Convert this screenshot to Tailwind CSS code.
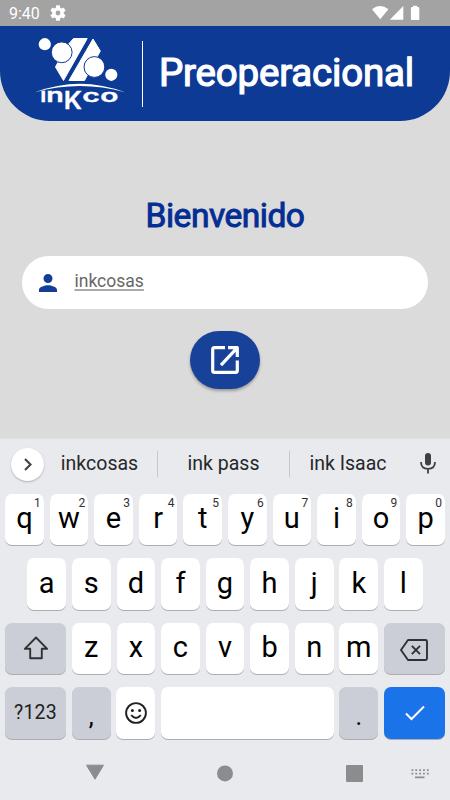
<!DOCTYPE html>
<html lang="es">
<head>
<meta charset="utf-8">
<meta name="viewport" content="width=device-width, initial-scale=1">
<title>Preoperacional</title>
<script src="https://cdn.jsdelivr.net/npm/@tailwindcss/browser@4"></script>
</head>
<body class="w-[450px] h-[800px] overflow-hidden bg-[#dbdbdb] font-[Roboto,sans-serif] flex flex-col">
<!-- Status bar -->
<div class="h-[26px] shrink-0 bg-[#a3a3a3] flex items-center pl-[9px] text-white">
  <span class="text-[16px] leading-none w-[41px] pt-px whitespace-nowrap">9:40</span>
  <svg class="w-4 h-4" viewBox="2 2 20 20" fill="white"><path d="M19.14 12.94c.04-.3.06-.61.06-.94s-.02-.64-.07-.94l2.03-1.58a.49.49 0 0 0 .12-.61l-1.92-3.32a.49.49 0 0 0-.59-.22l-2.39.96a7 7 0 0 0-1.62-.94l-.36-2.54a.48.48 0 0 0-.48-.41h-3.84a.48.48 0 0 0-.47.41l-.36 2.54a7 7 0 0 0-1.62.94l-2.39-.96a.48.48 0 0 0-.59.22L2.74 8.87a.48.48 0 0 0 .12.61l2.03 1.58a6 6 0 0 0 0 1.88l-2.03 1.58a.49.49 0 0 0-.12.61l1.92 3.32c.12.22.37.29.59.22l2.39-.96c.5.38 1.03.7 1.62.94l.36 2.54c.05.24.24.41.48.41h3.84c.24 0 .44-.17.47-.41l.36-2.54a7 7 0 0 0 1.62-.94l2.39.96c.22.08.47 0 .59-.22l1.92-3.32a.48.48 0 0 0-.12-.61zM12 15a3 3 0 1 1 0-6 3 3 0 0 1 0 6z"/></svg>
  <svg class="w-[49px] h-[16px] ml-auto mr-[29px]" viewBox="0 0 49 16" fill="white"><path d="M0 4.2Q8 -2.2 16.4 4.2L8.2 14.3ZM17.8 14.7L31.3 1V14.7ZM38.9 3q0-1 1-1h1.2V.8h4V2h1.2q1 0 1 1v11q0 1-1 1H39.9q-1 0-1-1z"/></svg>
</div>
<!-- Header -->
<header class="h-[95px] shrink-0 bg-[#0d3a95] rounded-b-[50px] flex items-start">
  <svg class="w-[142px] h-[95px] shrink-0" viewBox="0 26 142 95" fill="white">
    <path d="M73.5 38.500H87.2L63.5 80.5L55.500 67L66 47Z" stroke="white" stroke-linejoin="round"/>
    <path d="M93 39L100.300 51L84.5 80.5H69Z" stroke="white" stroke-linejoin="round"/>
    <circle cx="44.8" cy="44.2" r="6.1"/>
    <circle cx="61.7" cy="52.3" r="10.4" stroke="#0d3a95"/>
    <circle cx="94.4" cy="67" r="10.4" stroke="#0d3a95"/>
    <circle cx="111.3" cy="74.8" r="6.1"/>
    <path d="M35 92.3Q80 75.2 125 92.3Q80 79.5 35 92.3Z"/>
    <g font-family="Inter" font-weight="600" stroke="white" stroke-width=".35">
      <text transform="translate(40.2 101.8) scale(1.25 1)" font-size="18.500">ı</text>
      <text transform="translate(46.2 101.8) scale(1.55 1)" font-size="18.500">n</text>
      <text transform="translate(63.700 108.8) scale(1.06 1)" font-size="24.500">K</text>
      <text transform="translate(82.300 101.6) scale(1.68 1)" font-size="18">c</text>
      <text transform="translate(100.3 101.6) scale(1.66 1)" font-size="18">o</text>
    </g>
  </svg>
  <div class="w-px h-[66px] bg-white mt-[15px] shrink-0"></div>
  <h1 class="ml-[16px] mt-[24px] text-[38.5px] leading-[45px] tracking-[-0.2px] text-white whitespace-nowrap [-webkit-text-stroke:1.2px_white]">Preoperacional</h1>
</header>
<!-- Login form -->
<main class="h-[317px] shrink-0 flex flex-col items-center">
  <h2 class="mt-[74px] h-[42px] text-[33.500px] leading-[42px] tracking-[-0.480px] text-[#052e94] whitespace-nowrap [-webkit-text-stroke:1px_#052e94]">Bienvenido</h2>
  <div class="mt-[19px] w-[406px] h-[53px] rounded-full bg-white flex items-center pl-[17px] text-[#676767]">
    <svg class="w-[18px] h-[18px]" viewBox="4 4 16 16" fill="#133d98"><path d="M12 12a4 4 0 1 0 0-8 4 4 0 0 0 0 8zm0 2c-2.67 0-8 1.34-8 4v2h16v-2c0-2.66-5.330-4-8-4z"/></svg>
    <span class="ml-[17.500px] -mt-[2px] text-[17.500px] underline decoration-[#aaaaaa] decoration-2 underline-offset-[2px]">inkcosas</span>
  </div>
  <button class="mt-[22px] w-[70px] h-[58px] rounded-[29px] bg-[#184299] shadow-[0_2px_3px_rgba(0,0,0,0.3)] flex items-center justify-center" aria-label="Entrar">
    <svg class="w-[30px] h-[30px]" viewBox="0 0 30 30" fill="none" stroke="white" stroke-width="3.2" stroke-linejoin="round"><path d="M15 2.7H4.2Q2.7 2.700 2.700 4.200V25.800Q2.700 27.300 4.200 27.300H25.800Q27.300 27.300 27.300 25.800V15.500M18 2.700H27.300V12M26.700 3.300L11 20.200"/></svg>
  </button>
</main>
<!-- Keyboard -->
<section class="h-[362px] shrink-0 bg-[#e8eaee] border-t border-[#dfe0e3] flex flex-col">
  <div class="h-[55px] shrink-0 flex items-center text-[19.500px] text-[#26272a] pb-[5px]">
    <div class="ml-[11px] w-[33px] h-[33px] shrink-0 rounded-full bg-white shadow-[0_1px_2px_rgba(0,0,0,0.25)] flex items-center justify-center">
      <svg class="w-2 h-[13px]" viewBox="0 0 8 13" fill="none" stroke="#444" stroke-width="2.100"><path d="M1 1L6.500 6.500L1 12"/></svg>
    </div>
    <span class="w-[113px] pr-[2px] text-center">inkcosas</span>
    <i class="w-px h-[26px] bg-[#c5c7cb]"></i>
    <span class="w-[131px] text-center">ink pass</span>
    <i class="w-px h-[26px] bg-[#c5c7cb]"></i>
    <span class="w-[116px] text-center">ink Isaac</span>
    <svg class="ml-[14px] w-4 h-[22px] -mt-[2px]" viewBox="0 0 16 22"><rect x="5" y="1" width="6" height="12.500" rx="3" fill="#3c4043"/><path d="M1 10Q1 16.800 8 16.800T15 10M8 17V21.500" fill="none" stroke="#3c4043" stroke-width="1.800"/></svg>
  </div>
  <div id="keys" class="shrink-0 px-[5px] flex flex-col gap-[13px] text-[29px] text-black"></div>
  <nav class="flex-1">
    <svg class="w-[450px] h-[60px]" viewBox="0 739.300 450 60" fill="#8b8c8e"><path d="M86.500 765.500H103.500L95 779.500Z" stroke="#8b8c8e" stroke-linejoin="round"/><circle cx="225" cy="773.700" r="8"/><rect x="346" y="765.300" width="17" height="17" rx="1"/><path d="M411.500 770.500H429M411.500 774H429" stroke="#8b8c8e" stroke-width="1.800" stroke-dasharray="1.800 2.050"/><path d="M415 776.800H424.500V778.500H415Z"/></svg>
  </nav>
</section>
<script>
const keyClass = "relative h-[51.400px] rounded-[7px] shadow-[0_1px_0_#abadb1] flex items-center justify-center leading-none ";
const letter = (c, n) => `<div class="${keyClass} w-[38.700px] bg-white"><span class="-mt-[2px]">${c}</span>${n === undefined ? "" : `<sup class="absolute top-[2px] right-[3px] text-[12px] leading-[14px] text-[#303134]">${n}</sup>`}</div>`;
const key = (cls, body) => `<div class="${keyClass} ${cls}">${body}</div>`;
const row = body => `<div class="flex justify-center gap-[5.900px]">${body}</div>`;
const shift = `<svg class="w-[26px] h-[24px]" viewBox="0 0 26 24" fill="none" stroke="#303134" stroke-width="1.900" stroke-linejoin="round"><path d="M13 1.500L1.800 12.800H7.200V22.300H18.800V12.800H24.200Z"/></svg>`;
const del = `<svg class="w-[28px] h-[22px] mt-[3px]" viewBox="0 0 28 22" fill="none" stroke="#303134" stroke-width="1.900" stroke-linejoin="round"><path d="M8 1H25.500Q27 1 27 2.500V19.500Q27 21 25.500 21H8L1 11ZM11.800 6.800L20 15.200M20 6.800L11.800 15.200"/></svg>`;
const smile = `<svg class="w-[22px] h-[22px]" viewBox="0 0 22 22" fill="none" stroke="#202124" stroke-width="1.900"><circle cx="11" cy="11" r="9.900"/><path d="M6.200 13.200Q11 18.800 15.800 13.200"/><circle cx="7.400" cy="8.500" r="1.500" fill="#202124" stroke="none"/><circle cx="14.600" cy="8.500" r="1.500" fill="#202124" stroke="none"/></svg>`;
const check = `<svg class="w-[20px] h-[16px]" viewBox="0 0 20 16" fill="none" stroke="white" stroke-width="2"><path d="M1 8.500L6.500 14L19 1.500"/></svg>`;
document.getElementById("keys").innerHTML =
  row([..."qwertyuiop"].map((c, i) => letter(c, (i + 1) % 10)).join("")) +
  row([..."asdfghjkl"].map(c => letter(c)).join("")) +
  row(key("w-[61px] bg-[#cbced6]", shift) + [..."zxcvbnm"].map(c => letter(c)).join("") + key("w-[61px] bg-[#cbced6]", del)) +
  row(key("w-[61px] bg-[#cbced6]", `<span class="text-[19.500px] tracking-[0.2px] text-[#202124]">?123</span>`) +
    key("w-[38.700px] bg-[#cbced6]", `<span class="text-[25px] mt-[7px]">,</span>`) +
    key("w-[38.700px] bg-white", smile) +
    key("w-[172.500px] bg-white", "") +
    key("w-[38.700px] bg-[#cbced6]", `<span class="text-[25px] mt-[7px]">.</span>`) +
    key("w-[61px] bg-[#1a73e8]", check));
</script>
</body>
</html>
